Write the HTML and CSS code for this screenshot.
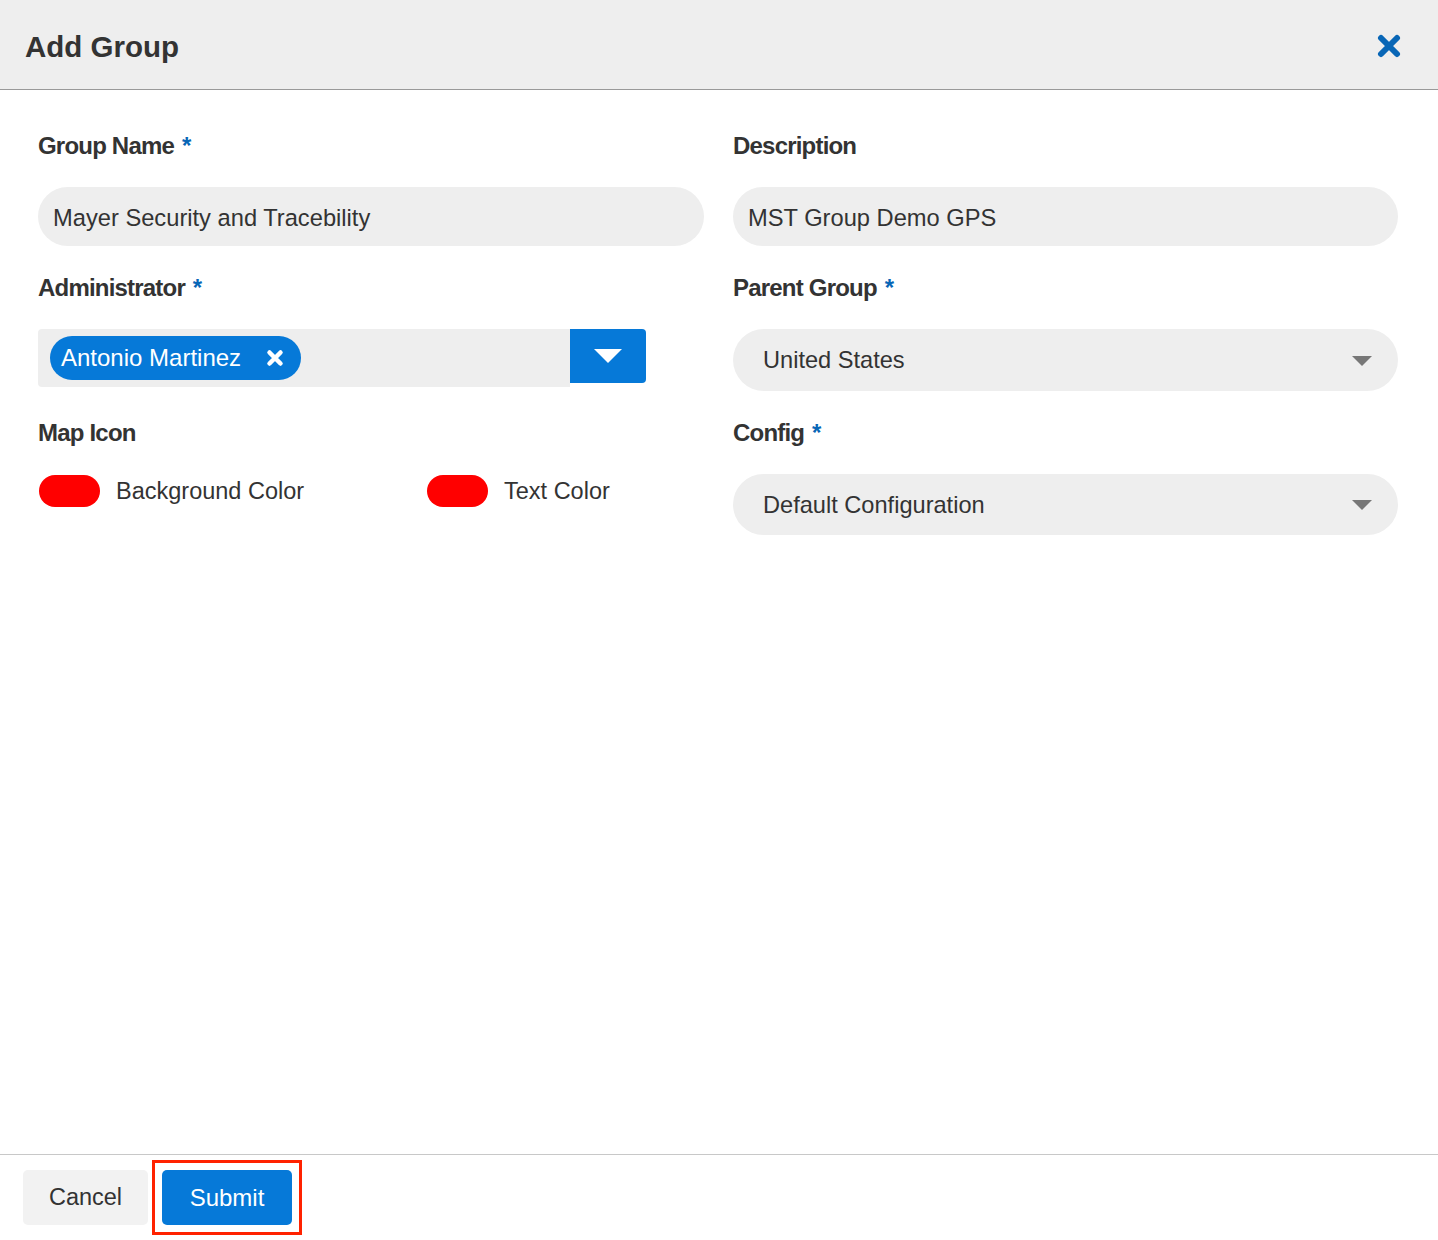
FILE: index.html
```html
<!DOCTYPE html>
<html lang="en">
<head>
<meta charset="utf-8">
<title>Add Group</title>
<link rel="stylesheet" href="styles.css">
</head>
<body>
<div class="modal">
  <header class="modal-header">
    <h1 class="modal-title">Add Group</h1>
    <button class="close-btn" type="button" aria-label="Close">
      <svg width="24" height="24" viewBox="0 0 24 24"><path d="M4 4 L20 20 M20 4 L4 20" stroke="#0866b6" stroke-width="6" stroke-linecap="round"/></svg>
    </button>
  </header>

  <main class="modal-body">
    <div class="form-grid">
      <div class="field">
        <label class="field-label">Group Name <span class="req">*</span></label>
        <div class="pill-input">Mayer Security and Tracebility</div>
      </div>
      <div class="field">
        <label class="field-label">Description</label>
        <div class="pill-input">MST Group Demo GPS</div>
      </div>

      <div class="field">
        <label class="field-label">Administrator <span class="req">*</span></label>
        <div class="multi-select">
          <div class="multi-values">
            <span class="chip">Antonio Martinez
              <svg class="chip-x" width="18" height="18" viewBox="0 0 18 18"><path d="M3.5 3.5 L14.5 14.5 M14.5 3.5 L3.5 14.5" stroke="#fff" stroke-width="4.5" stroke-linecap="round"/></svg>
            </span>
          </div>
          <button class="multi-toggle" type="button" aria-label="Open">
            <svg width="28" height="14" viewBox="0 0 28 14"><path d="M0 0 H28 L14 14 Z" fill="#fff"/></svg>
          </button>
        </div>
      </div>
      <div class="field">
        <label class="field-label">Parent Group <span class="req">*</span></label>
        <div class="pill-select">
          <span>United States</span>
          <svg class="caret" width="20" height="10" viewBox="0 0 20 10"><path d="M0 0 H20 L10 10 Z" fill="#777"/></svg>
        </div>
      </div>

      <div class="field">
        <label class="field-label">Map Icon</label>
        <div class="swatches">
          <div class="swatch-item"><span class="swatch"></span><span>Background Color</span></div>
          <div class="swatch-item"><span class="swatch"></span><span>Text Color</span></div>
        </div>
      </div>
      <div class="field">
        <label class="field-label">Config <span class="req">*</span></label>
        <div class="pill-select config">
          <span>Default Configuration</span>
          <svg class="caret" width="20" height="10" viewBox="0 0 20 10"><path d="M0 0 H20 L10 10 Z" fill="#777"/></svg>
        </div>
      </div>
    </div>
  </main>

  <footer class="modal-footer">
    <button class="btn btn-cancel" type="button">Cancel</button>
    <div class="highlight">
      <button class="btn btn-submit" type="button">Submit</button>
    </div>
  </footer>
</div>
</body>
</html>
```

FILE: styles.css
```css
* { box-sizing: border-box; }
html, body { margin: 0; padding: 0; background: #fff; }
body {
  font-family: "Liberation Sans", Arial, sans-serif;
  color: #333;
}
.modal {
  height: 1240px;
  display: flex;
  flex-direction: column;
}
.modal-header {
  height: 90px;
  flex: none;
  background: #eeeeee;
  border-bottom: 1px solid #999;
  display: flex;
  align-items: center;
  justify-content: space-between;
  padding: 5px 37px 0 25px;
}
.modal-title {
  margin: 0;
  font-size: 29.5px;
  font-weight: bold;
  color: #333;
}
.close-btn {
  border: 0;
  background: none;
  padding: 0;
  display: flex;
  margin-top: -3px;
}
.modal-body {
  flex: 1;
  padding: 42px 40px 0 38px;
}
.form-grid {
  display: grid;
  grid-template-columns: 666px 665px;
  column-gap: 29px;
  row-gap: 28px;
  align-items: start;
}
.field-label {
  display: block;
  height: 28px;
  line-height: 28px;
  font-size: 24px;
  letter-spacing: -0.8px;
  font-weight: bold;
  color: #333;
  margin-bottom: 27px;
}
.req { color: #0866b6; margin-left: 2px; }
.pill-input {
  height: 59px;
  border-radius: 30px;
  background: #eeeeee;
  display: flex;
  align-items: center;
  padding: 3px 15px 0;
  font-size: 23.7px;
  color: #333;
}
.multi-select {
  display: flex;
  align-items: flex-start;
  width: 608px;
}
.multi-values {
  flex: 1;
  height: 58px;
  background: #eeeeee;
  border-radius: 4px 0 0 4px;
  display: flex;
  align-items: center;
  padding-left: 12px;
}
.chip {
  display: inline-flex;
  align-items: center;
  height: 44px;
  padding: 0 17px 0 11px;
  background: #0679d8;
  color: #fff;
  border-radius: 22px;
  font-size: 24px;
  gap: 25px;
}
.multi-toggle {
  width: 76px;
  height: 54px;
  border: 0;
  background: #0679d8;
  border-radius: 0 4px 4px 0;
  display: flex;
  align-items: center;
  justify-content: center;
  padding: 0;
}
.pill-select {
  height: 62px;
  border-radius: 31px;
  background: #eeeeee;
  display: flex;
  align-items: center;
  justify-content: space-between;
  padding: 1px 26px 0 30px;
  font-size: 23.6px;
  color: #333;
}
.pill-select.config { height: 61px; margin-top: 1px; }
.swatches {
  display: flex;
  padding-top: 1px;
}
.swatch-item {
  width: 388px;
  display: flex;
  align-items: center;
  gap: 16px;
  font-size: 23.5px;
  color: #333;
  padding-left: 1px;
}
.swatch-item + .swatch-item { width: auto; }
.swatch {
  width: 61px;
  height: 32px;
  border-radius: 16px;
  background: #ff0000;
}
.modal-footer {
  height: 86px;
  flex: none;
  border-top: 1px solid #c8c8c8;
  display: flex;
  align-items: center;
  padding-left: 23px;
}
.btn {
  height: 55px;
  border: 0;
  border-radius: 5px;
  font-family: "Liberation Sans", Arial, sans-serif;
  font-size: 23.5px;
  padding: 0;
}
.btn-cancel {
  width: 125px;
  background: #f2f2f2;
  color: #333;
  margin-right: 4px;
}
.highlight {
  border: 3px solid #ff2200;
  padding: 7px;
  display: flex;
}
.btn-submit {
  width: 130px;
  background: #0679d8;
  color: #fff;
  font-size: 24px;
}
```
